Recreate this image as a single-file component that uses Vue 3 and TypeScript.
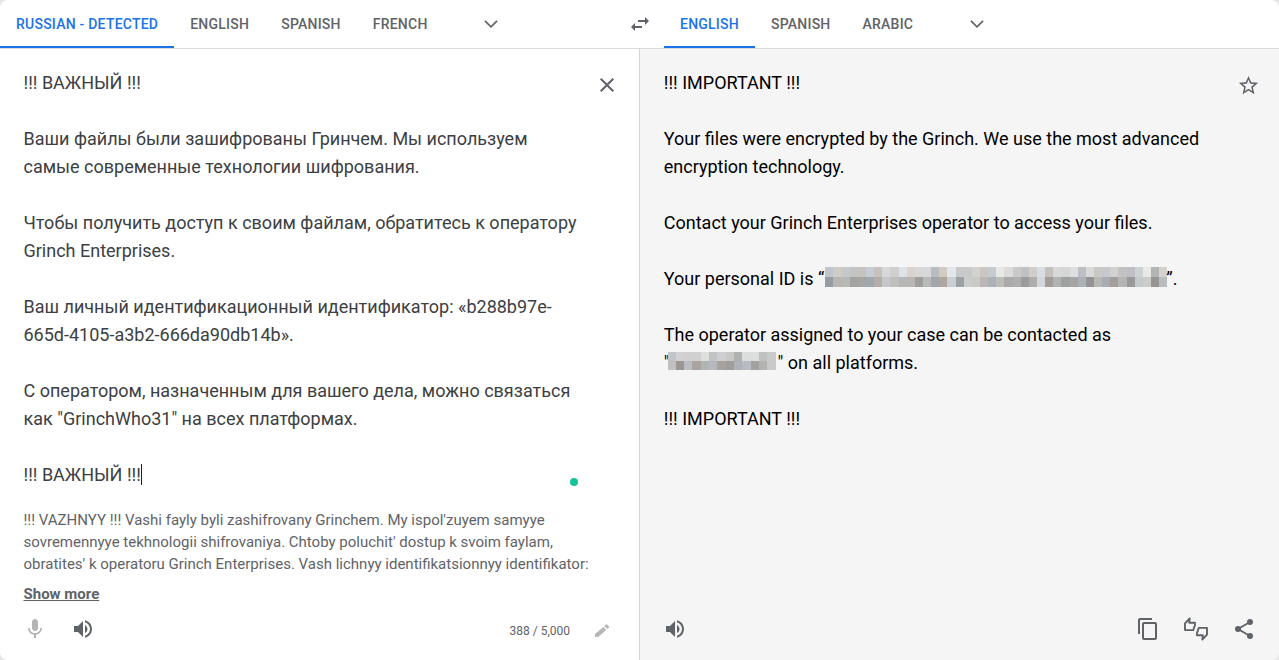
<script setup lang="ts">
const sourceTabs = ['RUSSIAN - DETECTED', 'ENGLISH', 'SPANISH', 'FRENCH']
const targetTabs = ['ENGLISH', 'SPANISH', 'ARABIC']

const sourceLines = [
  '!!! ВАЖНЫЙ !!!', '',
  'Ваши файлы были зашифрованы Гринчем. Мы используем',
  'самые современные технологии шифрования.', '',
  'Чтобы получить доступ к своим файлам, обратитесь к оператору',
  'Grinch Enterprises.', '',
  'Ваш личный идентификационный идентификатор: «b288b97e-',
  '665d-4105-a3b2-666da90db14b».', '',
  'С оператором, назначенным для вашего дела, можно связаться',
  'как "GrinchWho31" на всех платформах.', '',
]

const translitLines = [
  "!!! VAZHNYY !!! Vashi fayly byli zashifrovany Grinchem. My ispol'zuyem samyye",
  "sovremennyye tekhnologii shifrovaniya. Chtoby poluchit' dostup k svoim faylam,",
  "obratites' k operatoru Grinch Enterprises. Vash lichnyy identifikatsionnyy identifikator:",
]

// Tile colours of the redacted values, top row then bottom row.
const idTiles: string[] = (
  'c0c6ce cfcbc5 c4c8c8 c3c4c4 c4c3c0 c8ccd5 c5c2bf d7d8da ced0cf e0e3e5 d8d3cf d6d8d8 d6d8da b9bcc0 d2cbc4 e1e7ea c8c9c9 c8c9cb d2d2d0 cbc6c2 c5cbcf e8e8e8 dcdcdc cacaca c0c1c4 d0cdca d7dde1 c4c2bf d7d8d8 d6d6d6 dcdfe1 bcbfc3 dadad9 c9c8c5 c6c8cd d2d1cf c2c2c5 bfc0c6 cfd2d2 e9e9e6 b2b5b4 d6d3cf ' +
  '959ca4 b8b6b1 b8b8b4 a3a3a2 a5a5a3 a1a7af b5afa9 c7c8cd bfc0be b7b7b7 b8b7b4 9fa09d b8bab8 a4a7aa aea79f c8ced1 9da1a3 cbcdcb c9c9c7 b9b8b6 afb2b5 bcbcba aaaaaa afafaf 9a9b9a aeaeae d2d7da a29d98 b0b2b4 9fa0a0 a7a5a3 acb1b5 959395 b8b8b4 a9acb5 a29f9a b4b5b4 9a999a c4c9c9 cdcccb 979593 babdc0'
).split(' ')
const nameTiles: string[] = (
  'c1c5c9 d2d2d2 d0d0d0 d0d0d0 dededd c2c3c3 cdcecf c8c8c7 b1b1b1 dcdddd dddfde bfc1c2 cacaca ' +
  'c2bfbc 9b9693 b9bfc4 aaa39f b1b4b7 b5b8bc a8a29e a09e9c aeb3ba b9bcc2 a3a2a1 b3b3b2 c9c9c9'
).split(' ')
</script>

<template>
  <main class="card">
    <header class="bar">
      <nav class="tabs source-tabs">
        <span v-for="(tab, i) in sourceTabs" :key="tab" class="tab" :class="{ active: i === 0 }">{{ tab }}</span>
        <svg class="chevron" viewBox="0 0 24 24"><path d="M5.4 8.6 12 15.2l6.6-6.6" fill="none" stroke="currentColor" stroke-width="1.8" /></svg>
        <svg class="swap" viewBox="0 0 24 24"><path d="M6.99 11 3 15l3.99 4v-3H14v-2H6.99v-3zM21 9l-3.99-4v3H10v2h7.01v3L21 9z" /></svg>
      </nav>
      <nav class="tabs target-tabs">
        <span v-for="(tab, i) in targetTabs" :key="tab" class="tab" :class="{ active: i === 0 }">{{ tab }}</span>
        <svg class="chevron" viewBox="0 0 24 24"><path d="M5.4 8.6 12 15.2l6.6-6.6" fill="none" stroke="currentColor" stroke-width="1.8" /></svg>
      </nav>
    </header>
    <div class="panels">
      <section class="panel source">
        <div class="body">
          <div class="copy">
            <p v-for="(line, i) in sourceLines" :key="i">{{ line }}</p>
            <p>!!! ВАЖНЫЙ !!!<i class="caret"></i></p>
            <i class="dot"></i>
          </div>
          <svg class="close" viewBox="0 0 24 24"><path d="M19 6.41 17.59 5 12 10.59 6.41 5 5 6.41 10.59 12 5 17.59 6.41 19 12 13.41 17.59 19 19 17.59 13.41 12z" /></svg>
        </div>
        <div class="translit"><p v-for="line in translitLines" :key="line">{{ line }}</p></div>
        <a class="more">Show more</a>
        <footer class="tools">
          <svg class="faded" viewBox="0 0 24 24"><path d="M12 14c1.66 0 2.99-1.34 2.99-3L15 5c0-1.66-1.34-3-3-3S9 3.34 9 5v6c0 1.66 1.34 3 3 3zm5.3-3c0 3-2.54 5.1-5.3 5.1S6.7 14 6.7 11H5c0 3.41 2.72 6.23 6 6.72V21h2v-3.28c3.28-.48 6-3.3 6-6.72h-1.7z" /></svg>
          <svg class="speaker" viewBox="0 0 24 24"><path d="M3 9v6h4l5 5V4L7 9H3zm13.5 3c0-1.77-1.02-3.29-2.5-4.03v8.05c1.48-.73 2.5-2.25 2.5-4.02zM14 3.23v2.06c2.89.86 5 3.54 5 6.71s-2.11 5.85-5 6.71v2.06c4.01-.91 7-4.49 7-8.77s-2.99-7.86-7-8.77z" /></svg>
          <span class="count">388 / 5,000</span>
          <svg class="pencil" viewBox="0 0 18 18"><path d="M2 12.9V16h3.1l8.2-7.1-2.9-2.9zM15.9 6.4a.8.8 0 0 0 0-1.1l-1.8-1.8a.8.8 0 0 0-1.1 0l-1.7 1.6 2.9 2.9z" /></svg>
        </footer>
      </section>
      <section class="panel target">
        <div class="body">
          <div class="copy">
            <p>!!! IMPORTANT !!!</p>
            <p></p>
            <p>Your files were encrypted by the Grinch. We use the most advanced</p>
            <p>encryption technology.</p>
            <p></p>
            <p>Contact your Grinch Enterprises operator to access your files.</p>
            <p></p>
            <p class="row">Your personal ID is “<span class="mosaic id"><i v-for="(c, i) in idTiles" :key="i" :style="{ background: '#' + c }"></i></span>”.</p>
            <p></p>
            <p>The operator assigned to your case can be contacted as</p>
            <p class="row">"<span class="mosaic name"><i v-for="(c, i) in nameTiles" :key="i" :style="{ background: '#' + c }"></i></span>" on all platforms.</p>
            <p></p>
            <p>!!! IMPORTANT !!!</p>
          </div>
          <svg class="star" viewBox="0 0 24 24"><path d="m22 9.24-7.19-.62L12 2 9.19 8.63 2 9.24l5.46 4.73L5.82 21 12 17.27 18.18 21l-1.63-7.03L22 9.24zM12 15.4l-3.76 2.27 1-4.28-3.32-2.88 4.38-.38L12 6.1l1.71 4.04 4.38.38-3.32 2.88 1 4.28L12 15.4z" /></svg>
        </div>
        <footer class="tools">
          <svg class="speaker" viewBox="0 0 24 24"><path d="M3 9v6h4l5 5V4L7 9H3zm13.5 3c0-1.77-1.02-3.29-2.5-4.03v8.05c1.48-.73 2.5-2.25 2.5-4.02zM14 3.23v2.06c2.89.86 5 3.54 5 6.71s-2.11 5.85-5 6.71v2.06c4.01-.91 7-4.49 7-8.77s-2.99-7.86-7-8.77z" /></svg>
          <svg class="copy-icon" viewBox="0 0 24 24"><path d="M16 1H4c-1.1 0-2 .9-2 2v14h2V3h12V1zm3 4H8c-1.1 0-2 .9-2 2v14c0 1.1.9 2 2 2h11c1.1 0 2-.9 2-2V7c0-1.1-.9-2-2-2zm0 16H8V7h11v14z" /></svg>
          <svg class="rate" viewBox="0 0 26 26"><path d="M2 7.3 6.7 2.5 6.2 6.7H12V9L10.2 14.1H2zM24 18.7 19.3 23.5 19.8 19.3H14V17L15.8 11.9H24z" fill="none" stroke="currentColor" stroke-width="1.9" stroke-linejoin="round" /></svg>
          <svg class="share" viewBox="0 0 24 24"><path d="M18 5 6 12l12 7" fill="none" stroke="currentColor" stroke-width="1.8" /><circle cx="18" cy="5" r="3" /><circle cx="6" cy="12" r="3" /><circle cx="18" cy="19" r="3" /></svg>
        </footer>
      </section>
    </div>
  </main>
</template>

<style>
body {
  background: #e6e6e6;
}
</style>

<style scoped>
.card {
  width: 1279px;
  height: 660px;
  display: flex;
  flex-direction: column;
  overflow: hidden;
  border-radius: 8px;
  background: #fff;
  font-family: Roboto, "Liberation Sans", sans-serif;
  color: #5f6368;
}
p {
  margin: 0;
  white-space: pre;
}
svg {
  display: block;
  flex: none;
  width: 24px;
  height: 24px;
  fill: currentColor;
}
.bar {
  display: flex;
  height: 48px;
  border-bottom: 1px solid #dcdcdc;
}
.tabs {
  display: flex;
  align-items: center;
}
.source-tabs {
  width: 664px;
}
.tab {
  height: 48px;
  box-sizing: border-box;
  padding: 0 16px;
  border-bottom: 2px solid transparent;
  font-size: 14px;
  font-weight: 500;
  letter-spacing: 0.23px;
  line-height: 48px;
  white-space: nowrap;
}
.active {
  color: #1a73e8;
  border-color: #1a73e8;
}
.chevron {
  width: 22px;
  height: 22px;
  margin-left: 36px;
}
.target-tabs .chevron {
  margin-left: 37px;
}
.swap {
  margin-left: auto;
  margin-right: 12px;
}
.panels {
  display: flex;
  flex: 1;
}
.panel {
  display: flex;
  flex-direction: column;
  box-sizing: border-box;
}
.source {
  width: 640px;
  padding-left: 23.5px;
  border-right: 1px solid #d5d5d5;
}
.target {
  width: 639px;
  padding-left: 23.8px;
  background: #f5f5f5;
}
.body {
  display: flex;
  justify-content: space-between;
  padding-top: 20px;
}
.copy {
  position: relative;
  font-size: 18px;
  line-height: 28px;
  color: #3c4043;
}
.copy p {
  height: 28px;
}
.source .copy {
  width: 560px;
}
.target .copy {
  color: #000;
}
.caret {
  display: inline-block;
  width: 1px;
  height: 21px;
  margin-left: 0.5px;
  vertical-align: -4px;
  background: #202124;
}
.dot {
  position: absolute;
  left: 546.5px;
  bottom: 3px;
  width: 8px;
  height: 8px;
  border-radius: 50%;
  background: #15c39a;
}
.close {
  margin: 4px 20px 0 0;
}
.star {
  width: 23px;
  height: 23px;
  margin: 4.5px 19.5px 0 0;
}
.row {
  display: flex;
}
.mosaic {
  display: grid;
}
.id {
  width: 342px;
  height: 20px;
  margin: 2px -1px 0 1px;
  grid-template: repeat(2, 10px) / repeat(42, 1fr);
}
.name {
  width: 108px;
  height: 18px;
  margin: 3px 2px 0 -2px;
  grid-template: repeat(2, 9px) / repeat(13, 1fr);
}
.translit {
  margin-top: 20px;
  font-size: 15px;
  line-height: 22px;
}
.more {
  align-self: flex-start;
  margin-top: 8px;
  font-size: 15px;
  font-weight: 700;
  line-height: 22px;
  text-decoration: underline;
}
.tools {
  display: flex;
  align-items: center;
  height: 24px;
  margin-top: auto;
  margin-bottom: 19px;
}
.faded {
  color: #b4b4b4;
  margin-left: -0.5px;
}
.source .speaker {
  margin-left: 24px;
}
.target .speaker {
  margin-left: -0.8px;
}
.count {
  margin-left: auto;
  font-size: 12px;
  line-height: 20px;
  padding-top: 3px;
}
.pencil {
  width: 18px;
  height: 18px;
  margin: 2px 28px 0 23px;
  color: #b7b7b7;
}
.copy-icon {
  margin-left: auto;
}
.rate {
  width: 26px;
  height: 26px;
  margin-left: 23px;
}
.share {
  margin: 0 23px;
}
</style>
